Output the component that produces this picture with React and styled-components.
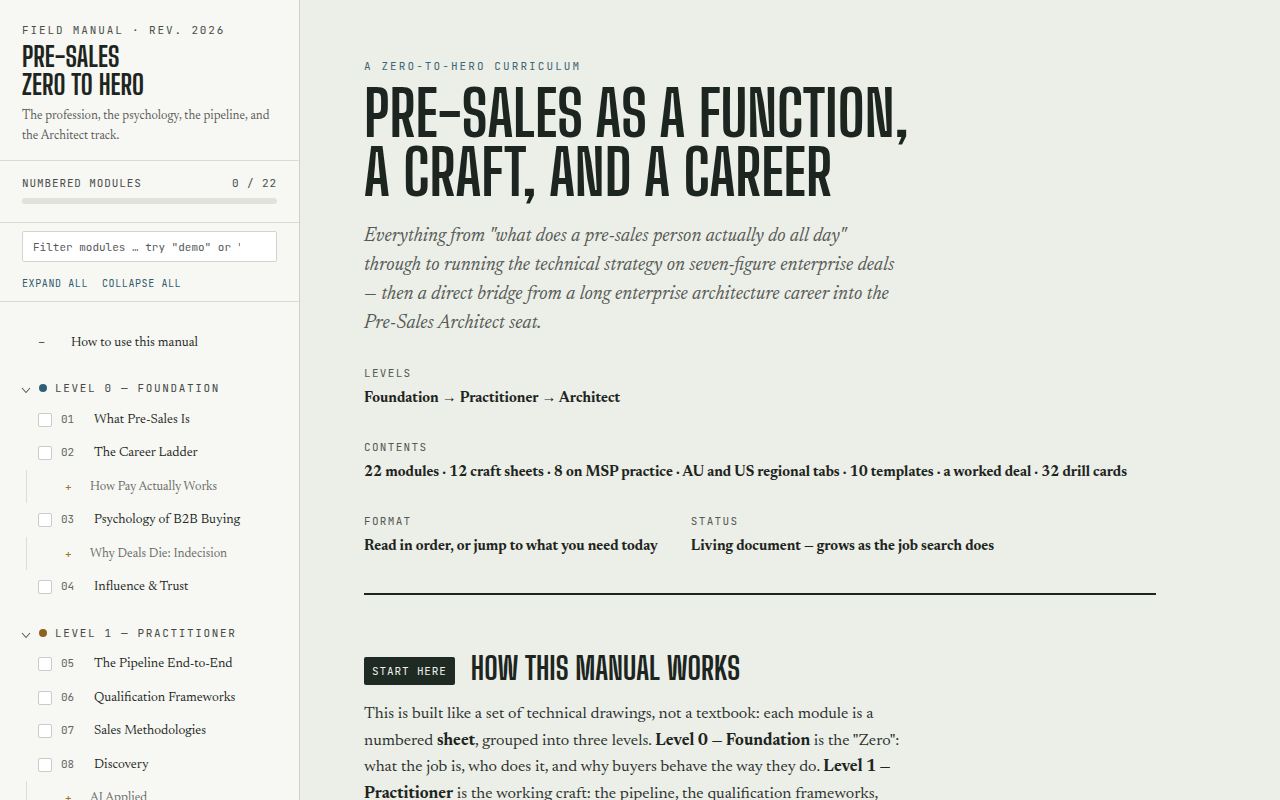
import React from "react";
import styled, { createGlobalStyle } from "styled-components";

const DISPLAY = '"Big Shoulders Display", "Oswald", "DejaVu Sans Condensed", sans-serif';
const SERIF = 'Newsreader, "Liberation Serif", serif';
const MONO = '"JetBrains Mono", "DejaVu Sans Mono", monospace';
const INK = "#1d2520";

const Global = createGlobalStyle`
  html, body { margin: 0; padding: 0; }
  body { background: #eceee8; color: ${INK}; font-family: ${SERIF}; }
  * { box-sizing: border-box; }
`;

const Shell = styled.div`
  display: grid;
  grid-template-columns: 300px 1fr;
  height: 100vh;
  overflow: hidden;
`;

const Sidebar = styled.aside`
  background: #f7f7f3;
  border-right: 1px solid #cfd0ca;
  overflow: hidden;
  display: flex;
  flex-direction: column;
`;

const SideHeader = styled.header`
  padding: 23px 22px 14px;
`;

const Eyebrow = styled.div`
  font-family: ${MONO};
  font-size: 11px;
  line-height: 14px;
  letter-spacing: ${(p) => p.$ls || "0.17em"};
  color: ${(p) => p.$color || "#4a4f4b"};
  text-transform: uppercase;
`;

const SideTitle = styled.h1`
  margin: 5px 0 0;
  font-family: ${DISPLAY};
  font-weight: 700;
  font-size: 28px;
  line-height: 28px;
  color: ${INK};
  text-transform: uppercase;
`;

const SideDesc = styled.p`
  margin: 8px 0 0;
  font-family: ${SERIF};
  font-size: 12.6px;
  line-height: 20px;
  color: #575b57;
`;

const Section = styled.div`
  border-top: 1px solid #d9dad4;
  padding: ${(p) => p.$pad};
`;

const ProgressRow = styled.div`
  display: flex;
  justify-content: space-between;
  font-family: ${MONO};
  font-size: 11px;
  line-height: 14px;
  letter-spacing: 0.08em;
  color: #4a4f4b;
  text-transform: uppercase;
`;

const Bar = styled.div`
  margin-top: 8px;
  height: 6px;
  border-radius: 3px;
  background: #e1e2db;
  overflow: hidden;
`;

const BarFill = styled.div`
  height: 100%;
  background: #2f5f75;
`;

const Filter = styled.input`
  display: block;
  width: 100%;
  height: 31px;
  border: 1px solid #d3d4ce;
  border-radius: 2px;
  background: #ffffff;
  padding: 0 36px 0 10px;
  font-family: ${MONO};
  font-size: 11px;
  color: ${INK};
  outline: none;
  &::placeholder { color: #55595a; }
`;

const Actions = styled.div`
  margin-top: 16px;
  display: flex;
  gap: 14px;
`;

const LinkButton = styled.button`
  border: 0;
  background: none;
  padding: 0;
  font-family: ${MONO};
  font-size: 10px;
  line-height: 12px;
  letter-spacing: 0.06em;
  color: #2f5d70;
  text-transform: uppercase;
  cursor: pointer;
`;

const Nav = styled.nav`
  padding-top: 24px;
`;

const IntroRow = styled.div`
  height: 33.3px;
  display: flex;
  align-items: center;
  padding-left: 38px;
  gap: 26px;
  font-size: 13.5px;
  color: #222824;
`;

const Dash = styled.span`
  font-family: ${MONO};
  font-size: 12px;
  color: #555;
  width: 7px;
`;

const Group = styled.div`
  margin-top: 14px;
`;

const LevelHead = styled.div`
  height: 30px;
  display: flex;
  align-items: center;
  padding-left: 21px;
  font-family: ${MONO};
  font-size: 11px;
  letter-spacing: 0.15em;
  color: #454a46;
`;

const Chevron = styled.svg`
  width: 10px;
  height: 10px;
  margin-top: 4px;
  flex: none;
`;

const Dot = styled.span`
  width: 8px;
  height: 8px;
  border-radius: 50%;
  background: ${(p) => p.$color};
  margin: 0 8px;
  flex: none;
`;

const ItemRow = styled.div`
  height: 33.4px;
  display: flex;
  align-items: center;
  padding-left: 38px;
`;

const Check = styled.span`
  width: 14px;
  height: 14px;
  border: 1px solid #cbccc6;
  border-radius: 2px;
  background: #fff;
  flex: none;
`;

const Num = styled.span`
  font-family: ${MONO};
  font-size: 11px;
  color: #646864;
  width: 33px;
  margin-left: 9px;
  margin-top: -2px;
  flex: none;
`;

const ItemTitle = styled.span`
  font-size: 13.5px;
  color: #222824;
  white-space: nowrap;
`;

const SubRow = styled.div`
  height: 33.4px;
  margin-left: 26px;
  border-left: 1px solid #dcddd6;
  display: flex;
  align-items: center;
  padding-left: 38px;
  gap: 18px;
`;

const Plus = styled.span`
  font-family: ${MONO};
  font-size: 11px;
  color: #9a7732;
  width: 7px;
`;

const SubTitle = styled.span`
  font-size: 12.8px;
  color: #676b67;
  white-space: nowrap;
`;

const Main = styled.main`
  overflow: hidden;
  padding: 59px 64px 0;
`;

const Content = styled.div`
  max-width: 792px;
`;

const H1 = styled.h2`
  margin: 10px 0 0;
  font-family: ${DISPLAY};
  font-weight: 700;
  font-size: 63px;
  line-height: 59px;
  color: ${INK};
  text-transform: uppercase;
`;

const Lede = styled.p`
  margin: 21px 0 0;
  max-width: 536px;
  font-family: ${SERIF};
  font-style: italic;
  font-size: 19.6px;
  line-height: 29px;
  color: #555a55;
`;

const MetaGrid = styled.div`
  margin-top: 28px;
  display: flex;
  flex-direction: column;
  gap: 30px;
`;

const MetaRow = styled.div`
  display: flex;
  gap: 33px;
`;

const Meta = styled.div``;

const MetaLabel = styled.div`
  font-family: ${MONO};
  font-size: 11px;
  line-height: 14px;
  letter-spacing: 0.12em;
  color: #555955;
  text-transform: uppercase;
`;

const MetaValue = styled.div`
  margin-top: 8px;
  font-family: ${SERIF};
  font-weight: 700;
  font-size: 14.8px;
  line-height: 22px;
  color: ${INK};
`;

const Rule = styled.hr`
  margin: 35px 0 0;
  border: 0;
  height: 2px;
  background: ${INK};
`;

const SectionHead = styled.div`
  margin-top: 62px;
  display: flex;
  align-items: flex-start;
  gap: 16px;
`;

const Badge = styled.span`
  display: inline-flex;
  align-items: center;
  height: 28px;
  padding: 0 8px;
  border-radius: 2px;
  background: #1f2a24;
  color: #eef0ea;
  font-family: ${MONO};
  font-size: 11px;
  letter-spacing: 0.08em;
  text-transform: uppercase;
`;

const H2 = styled.h3`
  margin: 0;
  font-family: ${DISPLAY};
  font-weight: 700;
  font-size: 31.5px;
  line-height: 22px;
  color: ${INK};
  text-transform: uppercase;
`;

const Body = styled.p`
  margin: 16px 0 0;
  max-width: 545px;
  font-family: ${SERIF};
  font-size: 16.7px;
  line-height: 26.6px;
  color: #2a302c;
  b { font-weight: 700; color: ${INK}; }
`;

const levels = [
  {
    name: "Level 0 — Foundation",
    color: "#2f5f75",
    items: [
      { n: "01", t: "What Pre-Sales Is" },
      { n: "02", t: "The Career Ladder", subs: ["How Pay Actually Works"] },
      { n: "03", t: "Psychology of B2B Buying", subs: ["Why Deals Die: Indecision"] },
      { n: "04", t: "Influence & Trust" },
    ],
  },
  {
    name: "Level 1 — Practitioner",
    color: "#8a6420",
    items: [
      { n: "05", t: "The Pipeline End-to-End" },
      { n: "06", t: "Qualification Frameworks" },
      { n: "07", t: "Sales Methodologies" },
      { n: "08", t: "Discovery", subs: ["AI Applied"] },
      { n: "09", t: "Technical Demos" },
    ],
  },
];

function ChevronDown() {
  return (
    <Chevron viewBox="0 0 10 10">
      <polyline points="1,3 5,7.5 9,3" fill="none" stroke="#5a5e5a" strokeWidth="1.1" />
    </Chevron>
  );
}

export default function App() {
  const done = 0;
  const total = 22;
  return (
    <>
      <Global />
      <Shell>
        <Sidebar>
          <SideHeader>
            <Eyebrow>Field Manual · Rev. 2026</Eyebrow>
            <SideTitle>
              Pre-Sales
              <br />
              Zero to Hero
            </SideTitle>
            <SideDesc>The profession, the psychology, the pipeline, and the Architect track.</SideDesc>
          </SideHeader>
          <Section $pad="15px 22px 18px">
            <ProgressRow>
              <span>Numbered modules</span>
              <span>
                {done} / {total}
              </span>
            </ProgressRow>
            <Bar>
              <BarFill style={{ width: `${(done / total) * 100}%` }} />
            </Bar>
          </Section>
          <Section $pad="8px 22px 11px">
            <Filter placeholder={'Filter modules … try "demo" or "MEDDPICC"'} />
            <Actions>
              <LinkButton>Expand all</LinkButton>
              <LinkButton>Collapse all</LinkButton>
            </Actions>
          </Section>
          <Section $pad="0">
            <Nav>
              <IntroRow>
                <Dash>–</Dash>
                <span>How to use this manual</span>
              </IntroRow>
              {levels.map((lv) => (
                <Group key={lv.name}>
                  <LevelHead>
                    <ChevronDown />
                    <Dot $color={lv.color} />
                    <span>{lv.name.toUpperCase()}</span>
                  </LevelHead>
                  {lv.items.map((it) => (
                    <React.Fragment key={it.n}>
                      <ItemRow>
                        <Check />
                        <Num>{it.n}</Num>
                        <ItemTitle>{it.t}</ItemTitle>
                      </ItemRow>
                      {(it.subs || []).map((s) => (
                        <SubRow key={s}>
                          <Plus>+</Plus>
                          <SubTitle>{s}</SubTitle>
                        </SubRow>
                      ))}
                    </React.Fragment>
                  ))}
                </Group>
              ))}
            </Nav>
          </Section>
        </Sidebar>
        <Main>
          <Content>
            <Eyebrow $ls="0.19em" $color="#3e6677">A zero-to-hero curriculum</Eyebrow>
            <H1>
              Pre-Sales as a function,
              <br />a craft, and a career
            </H1>
            <Lede>
              Everything from "what does a pre-sales person actually do all day" through to running the technical
              strategy on seven-figure enterprise deals — then a direct bridge from a long enterprise architecture
              career into the Pre-Sales Architect seat.
            </Lede>
            <MetaGrid>
              <Meta>
                <MetaLabel>Levels</MetaLabel>
                <MetaValue>Foundation → Practitioner → Architect</MetaValue>
              </Meta>
              <Meta>
                <MetaLabel>Contents</MetaLabel>
                <MetaValue>
                  22 modules · 12 craft sheets · 8 on MSP practice · AU and US regional tabs · 10 templates · a worked
                  deal · 32 drill cards
                </MetaValue>
              </Meta>
              <MetaRow>
                <Meta>
                  <MetaLabel>Format</MetaLabel>
                  <MetaValue>Read in order, or jump to what you need today</MetaValue>
                </Meta>
                <Meta>
                  <MetaLabel>Status</MetaLabel>
                  <MetaValue>Living document — grows as the job search does</MetaValue>
                </Meta>
              </MetaRow>
            </MetaGrid>
            <Rule />
            <SectionHead>
              <Badge>Start here</Badge>
              <H2>How this manual works</H2>
            </SectionHead>
            <Body>
              This is built like a set of technical drawings, not a textbook: each module is a numbered <b>sheet</b>,
              grouped into three levels. <b>Level 0 — Foundation</b> is the "Zero": what the job is, who does it, and
              why buyers behave the way they do. <b>Level 1 — Practitioner</b> is the working craft: the pipeline, the
              qualification frameworks, discovery, demos and the proof of value. <b>Level 2 — Architect</b> is the
              "Hero": running the technical strategy on the biggest deals.
            </Body>
          </Content>
        </Main>
      </Shell>
    </>
  );
}
